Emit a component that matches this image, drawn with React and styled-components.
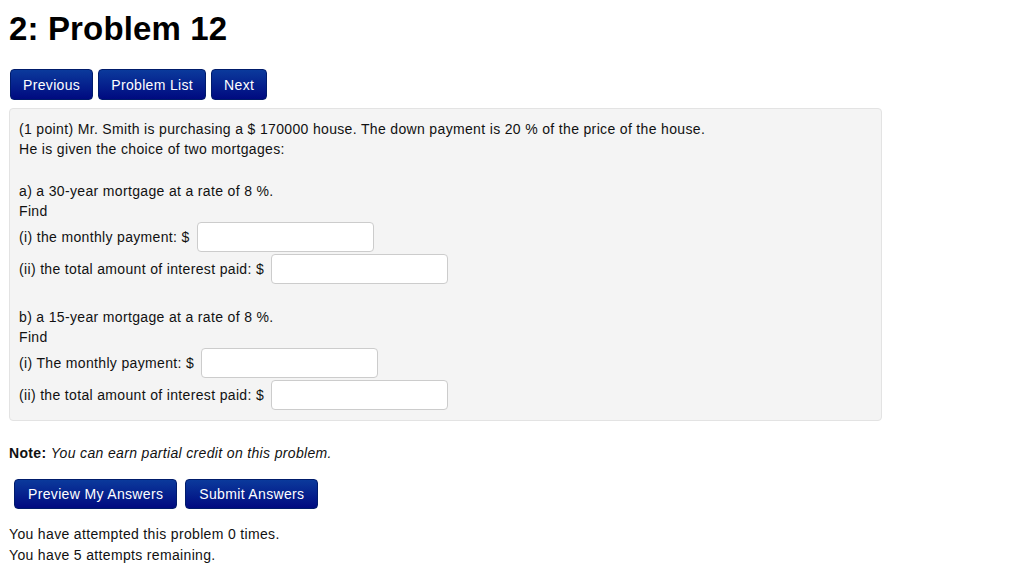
import React from "react";
import styled, { createGlobalStyle } from "styled-components";

const Global = createGlobalStyle`
  body {
    margin: 0;
    background: #ffffff;
    font-family: "Liberation Sans", Arial, Helvetica, sans-serif;
    color: #111;
  }
`;

export default function App() {
  return (
    <Page>
      <Global />
      <Title>2: Problem 12</Title>
      <Nav>
        <Button>Previous</Button>
        <Button>Problem List</Button>
        <Button>Next</Button>
      </Nav>
      <ProblemBox>
        <Line>(1 point) Mr. Smith is purchasing a $ 170000 house. The down payment is 20 % of the price of the house.</Line>
        <Line>He is given the choice of two mortgages:</Line>
        <Gap />
        <Line>a) a 30-year mortgage at a rate of 8 %.</Line>
        <Line>Find</Line>
        <AnswerRow>(i) the monthly payment: $<Input /></AnswerRow>
        <AnswerRow>(ii) the total amount of interest paid: $<Input /></AnswerRow>
        <Gap />
        <Line>b) a 15-year mortgage at a rate of 8 %.</Line>
        <Line>Find</Line>
        <AnswerRow>(i) The monthly payment: $<Input /></AnswerRow>
        <AnswerRow>(ii) the total amount of interest paid: $<Input /></AnswerRow>
      </ProblemBox>
      <Note>
        <b>Note:</b> <i>You can earn partial credit on this problem.</i>
      </Note>
      <Submit>
        <Button $wide>Preview My Answers</Button>
        <Button $wide>Submit Answers</Button>
      </Submit>
      <Attempts>
        <div>You have attempted this problem 0 times.</div>
        <div>You have 5 attempts remaining.</div>
      </Attempts>
    </Page>
  );
}

const Page = styled.div`
  padding: 0 9px;
  font-size: 14px;
  letter-spacing: 0.34px;
`;
const Title = styled.h1`
  margin: 0;
  padding-top: 11px;
  font-size: 33px;
  line-height: 36px;
  font-weight: 700;
  letter-spacing: 0.15px;
  color: #000;
`;
const Nav = styled.div`
  display: flex;
  gap: 5px;
  margin-top: 22px;
  padding-left: 1px;
`;
const Button = styled.button`
  height: ${(p) => (p.$wide ? "30px" : "31px")};
  padding: 0 ${(p) => (p.$wide ? "13px" : "12px")};
  font-family: inherit;
  font-size: 14px;
  letter-spacing: 0.34px;
  color: #fff;
  background: linear-gradient(to bottom, #0b3a9c, #000a80);
  border: 1px solid #001b6b;
  border-radius: 4px;
  cursor: pointer;
`;
const ProblemBox = styled.div`
  margin-top: 8px;
  width: 873px;
  box-sizing: border-box;
  padding: 10px 9px 9px;
  background: #f4f4f4;
  border: 1px solid #e3e3e3;
  border-radius: 4px;
`;
const Line = styled.div`
  line-height: 20px;
  height: 20px;
`;
const Gap = styled.div`
  height: 22px;
`;
const AnswerRow = styled.div`
  display: flex;
  align-items: center;
  height: 32px;
`;
const Input = styled.input`
  margin-left: 7px;
  width: 177px;
  height: 30px;
  box-sizing: border-box;
  border: 1px solid #cccccc;
  border-radius: 4px;
  background: #fff;
`;
const Note = styled.div`
  margin-top: 22px;
  line-height: 20px;
`;
const Submit = styled.div`
  display: flex;
  gap: 8px;
  margin-top: 16px;
  padding-left: 5px;
`;
const Attempts = styled.div`
  margin-top: 15px;
  line-height: 21px;
`;
